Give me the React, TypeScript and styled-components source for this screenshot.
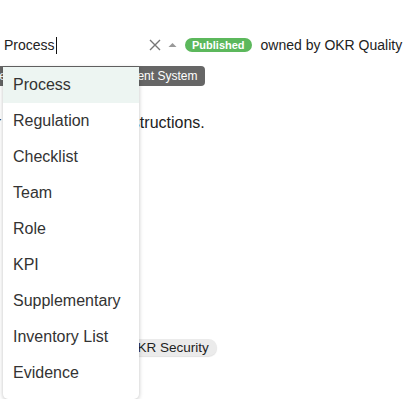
import React from 'react';
import styled, { createGlobalStyle } from "styled-components";

const GlobalStyle = createGlobalStyle`
  html, body {
    margin: 0;
    background: #fff;
    font-family: "Liberation Sans", Arial, sans-serif;
    color: #222;
  }
`

const types = ["Process", "Regulation", "Checklist", "Team", "Role", "KPI", "Supplementary", "Inventory List", "Evidence"]

export default function App() {
    return (
        <>
            <GlobalStyle/>
            <Page>
                <Header>
                    <Label>Type</Label>
                    <Combo>
                        <Value>Process<Caret/></Value>
                        <Spacer/>
                        <svg width="12" height="12" viewBox="0 0 12 12">
                            <path d="M1 1 L11 11 M11 1 L1 11" stroke="#777" strokeWidth="1.4" fill="none"/>
                        </svg>
                        <svg width="9" height="6" viewBox="0 0 9 6">
                            <path d="M0.5 5 L4.5 1 L8.5 5 Z" fill="#999"/>
                        </svg>
                        <Menu>
                            {types.map((t, i) => (
                                <Item key={t} $active={i === 0}>{t}</Item>
                            ))}
                        </Menu>
                    </Combo>
                    <Badge>Published</Badge>
                    <Owner>owned by OKR Quality</Owner>
                </Header>
                <Tags>
                    <DarkTag>Integrated Quality Management System</DarkTag>
                </Tags>
                <Text>Refer to the complete instructions.</Text>
                <Chips>
                    <Chip>OKR Quality</Chip>
                    <Chip>OKR Security</Chip>
                </Chips>
            </Page>
        </>
    );
}

const Page = styled.div`
  display: flex;
  flex-direction: column;
  min-height: 399px;
  margin-left: -34px;
`
const Header = styled.div`
  display: flex;
  align-items: center;
  height: 24px;
  margin-top: 33px;
`
const Label = styled.span`
  font-size: 14px;
  width: 31px;
  margin-right: 6px;
`
const Combo = styled.div`
  position: relative;
  display: flex;
  align-items: center;
  gap: 7px;
  width: 173px;
  padding-left: 1px;
  margin-right: 8px;
`
const Value = styled.span`
  display: flex;
  align-items: center;
  font-size: 14px;
  color: #222;
`
const Caret = styled.span`
  width: 1px;
  height: 17px;
  background: #111;
  margin-left: 1px;
`
const Spacer = styled.span`
  flex: 1;
`
const Menu = styled.div`
  position: absolute;
  top: calc(100% + 13px);
  left: 0;
  width: 136px;
  padding-bottom: 8px;
  background: #fff;
  border-radius: 0 0 5px 5px;
  box-shadow: 0 1px 4px rgba(0, 0, 0, 0.25);
  z-index: 10;
`
const Item = styled.div<{ $active?: boolean }>`
  height: 36px;
  display: flex;
  align-items: center;
  padding-left: 10px;
  font-size: 16px;
  color: #333;
  background: ${p => p.$active ? "#edf5f2" : "#fff"};
`
const Badge = styled.span`
  height: 14px;
  line-height: 14px;
  padding: 0 7px;
  border-radius: 7px;
  background: #5cb85c;
  color: #fff;
  font-size: 11px;
  font-weight: bold;
  margin-right: 9px;
`
const Owner = styled.span`
  font-size: 14px;
  white-space: nowrap;
`
const Tags = styled.div`
  display: flex;
  margin-top: 9px;
  padding-left: 12px;
`
const DarkTag = styled.span`
  height: 20px;
  line-height: 20px;
  padding: 0 8px;
  border-radius: 4px;
  background: #666;
  color: #fff;
  font-size: 12px;
  white-space: nowrap;
`
const Text = styled.p`
  margin: 27px 0 0 -4px;
  font-size: 16px;
  line-height: 20px;
  white-space: nowrap;
`
const Chips = styled.div`
  display: flex;
  gap: 4px;
  margin-top: 206px;
  padding-left: 58px;
`
const Chip = styled.span`
  height: 17px;
  line-height: 17px;
  padding: 0 8px;
  border-radius: 9px;
  background: #ebebeb;
  box-shadow: 0 1px 1px rgba(0, 0, 0, 0.12);
  font-size: 13.5px;
  white-space: nowrap;
`
